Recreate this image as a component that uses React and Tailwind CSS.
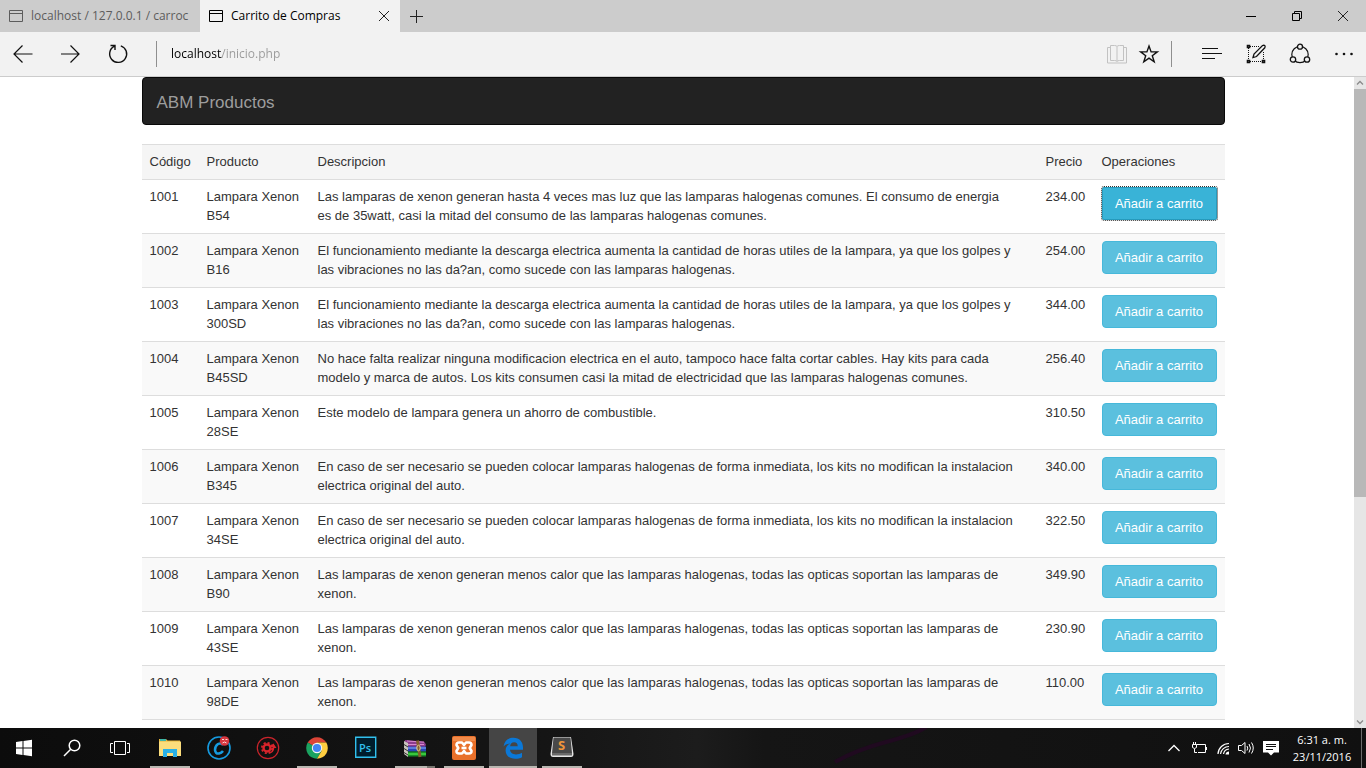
import { useState } from 'react';
import clsx from 'clsx';

const XENON_CALOR =
  'Las lamparas de xenon generan menos calor que las lamparas halogenas, todas las opticas soportan las lamparas de xenon.';
const XENON_GOLPES =
  'El funcionamiento mediante la descarga electrica aumenta la cantidad de horas utiles de la lampara, ya que los golpes y las vibraciones no las da?an, como sucede con las lamparas halogenas.';
const XENON_KITS =
  'En caso de ser necesario se pueden colocar lamparas halogenas de forma inmediata, los kits no modifican la instalacion electrica original del auto.';

const products = [
  {
    id: '1001',
    name: 'Lampara Xenon B54',
    description:
      'Las lamparas de xenon generan hasta 4 veces mas luz que las lamparas halogenas comunes. El consumo de energia es de 35watt, casi la mitad del consumo de las lamparas halogenas comunes.',
    price: 234,
  },
  { id: '1002', name: 'Lampara Xenon B16', description: XENON_GOLPES, price: 254 },
  { id: '1003', name: 'Lampara Xenon 300SD', description: XENON_GOLPES, price: 344 },
  {
    id: '1004',
    name: 'Lampara Xenon B45SD',
    description:
      'No hace falta realizar ninguna modificacion electrica en el auto, tampoco hace falta cortar cables. Hay kits para cada modelo y marca de autos. Los kits consumen casi la mitad de electricidad que las lamparas halogenas comunes.',
    price: 256.4,
  },
  {
    id: '1005',
    name: 'Lampara Xenon 28SE',
    description: 'Este modelo de lampara genera un ahorro de combustible.',
    price: 310.5,
  },
  { id: '1006', name: 'Lampara Xenon B345', description: XENON_KITS, price: 340 },
  { id: '1007', name: 'Lampara Xenon 34SE', description: XENON_KITS, price: 322.5 },
  { id: '1008', name: 'Lampara Xenon B90', description: XENON_CALOR, price: 349.9 },
  { id: '1009', name: 'Lampara Xenon 43SE', description: XENON_CALOR, price: 230.9 },
  { id: '1010', name: 'Lampara Xenon 98DE', description: XENON_CALOR, price: 110 },
];

export default function App() {
  return (
    <div className="flex h-screen flex-col overflow-hidden bg-white font-['Open_Sans','Noto_Sans',sans-serif]">
      <TabStrip />
      <Toolbar />
      <div className="relative min-h-0 flex-1 overflow-hidden">
        <ProductPage />
        <Scrollbar />
      </div>
      <Taskbar />
    </div>
  );
}

/* Browser */

function TabStrip() {
  return (
    <header className="flex h-8 shrink-0 bg-[#cccccc] text-xs">
      <Tab title="localhost / 127.0.0.1 / carroc" />
      <Tab title="Carrito de Compras" active />
      <button aria-label="Nueva pestaña" className="flex w-8 items-center justify-center">
        <svg width="14" height="14" stroke="#222" fill="none">
          <path d="M7.5 1v13M1 7.5h13" />
        </svg>
      </button>
      <div className="ml-auto flex">
        <button aria-label="Minimizar" className="flex w-[46px] items-center justify-center">
          <svg width="10" height="10" stroke="#000" fill="none">
            <path d="M0 5.5h10" />
          </svg>
        </button>
        <button aria-label="Restaurar" className="flex w-[46px] items-center justify-center">
          <svg width="10" height="10" stroke="#000" fill="none">
            <path d="M.5 2.5h7v7h-7zM2.5 2.5v-2h7v7h-2" />
          </svg>
        </button>
        <button aria-label="Cerrar" className="flex w-[46px] items-center justify-center">
          <CloseIcon />
        </button>
      </div>
    </header>
  );
}

function Tab({ title, active }) {
  return (
    <div
      className={clsx(
        'flex w-[200px] items-center pr-2 pl-[9px]',
        active ? 'bg-[#f2f2f2] text-black' : 'text-[#5c5c5c]'
      )}
    >
      <svg width="14" height="12" fill="none" stroke="currentColor" className="shrink-0">
        <path d="M.5 .5h13v11H.5zM.5 3.5h13" />
      </svg>
      <span className="ml-2 flex-1 overflow-hidden whitespace-nowrap">{title}</span>
      {active && (
        <button aria-label="Cerrar pestaña" className="flex w-4 justify-center">
          <CloseIcon />
        </button>
      )}
    </div>
  );
}

function CloseIcon() {
  return (
    <svg width="10" height="10" stroke="#222" fill="none">
      <path d="M0 0l10 10M10 0L0 10" />
    </svg>
  );
}

function ToolButton({ label, className, children }) {
  return (
    <button aria-label={label} className={clsx('flex h-full items-center justify-center', className)}>
      <svg width="22" height="22" fill="none" stroke="#111">
        {children}
      </svg>
    </button>
  );
}

function Toolbar() {
  const [url, setUrl] = useState('localhost/inicio.php');

  return (
    <nav className="flex h-[45px] shrink-0 items-center border-b border-[#cccccc] bg-[#f2f2f2]">
      <ToolButton label="Atrás" className="w-[47px]">
        <path d="M.5 11h19M9.500 2.500L1 11l8.500 8.500" strokeWidth="1.200" />
      </ToolButton>
      <ToolButton label="Adelante" className="w-[47px]">
        <path d="M1 11h18.500M10.500 2.500L19 11l-8.500 8.500" strokeWidth="1.200" />
      </ToolButton>
      <ToolButton label="Actualizar" className="w-[47px]">
        <path d="M13.800 2.800A8.500 8.500 0 1 1 7.500 3.200M3.500 2.500h4.500v4.500" strokeWidth="1.400" />
      </ToolButton>
      <div className="ml-[15px] h-[26px] w-px bg-[#8f8f8f]" />
      <input
        aria-label="Dirección"
        value={url}
        onChange={(e) => setUrl(e.target.value)}
        className="ml-3.5 min-w-0 flex-1 bg-[linear-gradient(90deg,#000_51px,#999_51px)] bg-clip-text text-xs text-transparent outline-none"
      />
      <ToolButton label="Vista de lectura" className="w-8">
        <g stroke="#c2c2c2">
          <path d="M4.500 2.500h4q2 0 2.500 1 .5-1 2.500-1h4v15h-4q-2 0-2.500 1-.5-1-2.500-1h-4zM11 3.500v15" />
          <path d="M4 4.500H1.500v15.500h19V4.500H18" />
        </g>
      </ToolButton>
      <ToolButton label="Favoritos" className="w-8">
        <path
          d="M11 3l2.100 5.900h6.200l-5 3.800 1.900 6.100L11 15.200l-5.200 3.600 1.900-6.100-5-3.800h6.200z"
          strokeWidth="1.400"
        />
      </ToolButton>
      <div className="mr-[18px] ml-1.5 h-[26px] w-px bg-[#8f8f8f]" />
      <ToolButton label="Centro" className="w-11">
        <path d="M1 5.500h16M1 10.500h20M1 15.500h13" />
      </ToolButton>
      <ToolButton label="Crear nota web" className="w-11">
        <path d="M5 3.500h9M5 18.500h12M3.500 5v12M18.500 9v8" strokeDasharray="1 1" />
        <path d="M2.500 2.500h2v2h-2zM2.500 17.500h2v2h-2zM17.500 17.500h2v2h-2z" strokeWidth="1.600" />
        <path d="M8 14.500l1-3.500 8.500-8.500q1.500-.5 2.300 0 .7 1 0 2.300L11.500 13.500z" strokeWidth="1.300" />
      </ToolButton>
      <ToolButton label="Compartir" className="w-11">
        <circle cx="11" cy="11.500" r="8.200" strokeWidth="1.200" />
        <g fill="#f2f2f2" strokeWidth="1.300">
          <circle cx="11" cy="3.700" r="2.500" />
          <circle cx="4" cy="16.500" r="2.700" />
          <circle cx="18" cy="16.500" r="2.700" />
        </g>
      </ToolButton>
      <ToolButton label="Más" className="w-11">
        <g fill="#111" stroke="none">
          <circle cx="3.500" cy="11" r="1.300" />
          <circle cx="11" cy="11" r="1.300" />
          <circle cx="18.500" cy="11" r="1.300" />
        </g>
      </ToolButton>
    </nav>
  );
}

function Scrollbar() {
  return (
    <div className="absolute inset-y-0 right-0 flex w-3 flex-col bg-[#e6e6e6]">
      <svg width="12" height="12" fill="none" stroke="#8a8a8a" className="shrink-0">
        <path d="M3 7.500l3-3 3 3" strokeWidth="1.300" />
      </svg>
      <div className="min-h-0 flex-1">
        <div className="h-[65%] bg-[#b8b8b8]" />
      </div>
      <svg width="12" height="12" fill="none" stroke="#8a8a8a" className="shrink-0">
        <path d="M3 4.500l3 3 3-3" strokeWidth="1.300" />
      </svg>
    </div>
  );
}

/* Page */

function ProductPage() {
  return (
    <main className="mx-auto max-w-[1083px] font-['Liberation_Sans',Arial,sans-serif] text-[13px] leading-[19px] text-[#333]">
      <div className="mb-[19px] flex h-12 items-center rounded border border-[#080808] bg-[#222] px-3.5 pt-0.5">
        <a href="#" className="text-[17px] text-[#9d9d9d]">
          ABM Productos
        </a>
      </div>

      <table className="w-full table-fixed border-b border-[#ddd] text-left">
        <thead>
          <tr className="border-t border-[#ddd] bg-[#f5f5f5]">
            <HeaderCell className="w-[57px]">Código</HeaderCell>
            <HeaderCell className="w-[111px]">Producto</HeaderCell>
            <HeaderCell>Descripcion</HeaderCell>
            <HeaderCell className="w-14">Precio</HeaderCell>
            <HeaderCell className="w-[131px]">Operaciones</HeaderCell>
          </tr>
        </thead>
        <tbody>
          {products.map((product, index) => (
            <tr key={product.id} className="border-t border-[#ddd] align-top even:bg-[#f9f9f9]">
              <td className="px-2 pt-[7px] pb-2">{product.id}</td>
              <td className="px-2 pt-[7px] pb-2">{product.name}</td>
              <td className="pt-[7px] pr-[23px] pb-2 pl-2">{product.description}</td>
              <td className="px-2 pt-[7px] pb-2">{product.price.toFixed(2)}</td>
              <td className="px-2 pt-[7px]">
                <button
                  className={clsx(
                    'h-[33px] w-full border text-white',
                    index === 0
                      ? 'rounded-xs border-[#269abc] bg-[#39b3d7] outline-1 outline-dotted outline-[#333]'
                      : 'rounded border-[#46b8da] bg-[#5bc0de]'
                  )}
                >
                  Añadir a carrito
                </button>
              </td>
            </tr>
          ))}
        </tbody>
      </table>
    </main>
  );
}

function HeaderCell({ className, children }) {
  return <th className={clsx('px-2 pt-[7px] pb-2 font-normal', className)}>{children}</th>;
}

/* Windows taskbar */

function Taskbar() {
  return (
    <footer className="relative flex h-10 shrink-0 bg-[linear-gradient(90deg,#0c0c0c,#151515_40%,#1c1c1c_51%,#151515_56%,#101010)] text-white">
      <svg width="96" height="40" className="absolute left-[832px]" fill="none">
        <path d="M3 34Q24 22 54 14T94 -1" stroke="#200a20" strokeWidth="4" />
      </svg>

      <div className="mr-0.5 flex">
        <SystemButton label="Inicio">
          <path
            d="M4 6l6.500-1v6.500H4zM11.500 4.900L20 3.700v7.800h-8.500zM4 12.500h6.500V19L4 18zM11.500 12.500H20v7.800L11.500 19.100z"
            fill="#fff"
          />
        </SystemButton>
        <SystemButton label="Buscar">
          <circle cx="14.500" cy="9.500" r="5.300" stroke="#fff" strokeWidth="1.500" />
          <path d="M10.700 13.300L4 20" stroke="#fff" strokeWidth="1.500" />
        </SystemButton>
        <SystemButton label="Vista de tareas">
          <path d="M6.500 5.500h11v13h-11zM5 7.500H2.500v9H5M19 7.500h2.500v9H19" stroke="#fff" />
        </SystemButton>
      </div>

      <div className="flex gap-px">
        <TaskButton label="Explorador de archivos" running>
          <path d="M1 3h7l1.500 1.500H22V20H1z" fill="#e8b73c" />
          <path d="M2 3h6v2H2z" fill="#3fb6a8" />
          <path d="M1 5.500h22V20H1z" fill="#fbdd7c" />
          <path d="M5 13h14v8h-4v-4H9v4H5z" fill="#29b0e6" />
        </TaskButton>
        <TaskButton label="CCleaner">
          <circle cx="12" cy="12" r="11" stroke="#169be0" strokeWidth="1.600" />
          <path d="M16 9Q14 6.500 11 8 8 10 8 14q.5 4.200 4 3.500 2.500-.5 4-2.500" stroke="#169be0" strokeWidth="2.500" />
          <circle cx="17.500" cy="5" r="4.800" fill="#d8373f" />
          <path d="M15 3.500h2M18.500 3.500h2M15.500 7q2-2 4 0" stroke="#fbd5d5" />
        </TaskButton>
        <TaskButton label="Optimizador">
          <circle cx="12" cy="12" r="10.700" stroke="#c9242b" strokeWidth="1.200" />
          <circle cx="11" cy="12" r="3.500" stroke="#d8242b" strokeWidth="2.400" />
          <circle cx="11" cy="12" r="5.200" stroke="#d8242b" strokeWidth="1.800" strokeDasharray="2.100 1.980" />
          <path d="M12 18q4.500-2 4.500-7H13l4.500-3.500L20.500 12h-2.200q0 5-6.300 6z" fill="#d8242b" />
        </TaskButton>
        <TaskButton label="Google Chrome" running>
          <path d="M12 12L2.650 6.600A10.800 10.800 0 0 1 21.350 6.600H12z" fill="#dc4437" />
          <path d="M12 12L2.650 6.600A10.800 10.800 0 0 0 12 22.800L16.700 14.700z" fill="#1aa260" />
          <path d="M12 12L16.700 14.700 12 22.800A10.800 10.800 0 0 0 21.350 6.600H12z" fill="#ffcd40" />
          <circle cx="12" cy="12" r="5.200" fill="#f5f5f5" />
          <circle cx="12" cy="12" r="4.100" fill="#4285f4" />
        </TaskButton>
        <TaskButton label="Photoshop">
          <path d="M1.700 1.200h20v20h-20z" fill="#001d2c" stroke="#31c0ee" strokeWidth="1.400" />
          <text x="5" y="15.500" fill="#31c0ee" fontSize="11" fontWeight="600">
            Ps
          </text>
        </TaskButton>
        <TaskButton label="WinRAR" running stacked>
          <path d="M2 4l19 1.500 2 3-1 3H4L1 8z" fill="#8d3d8d" />
          <path d="M4 5l17 1.200M3 8.500h18" stroke="#d88ad0" />
          <path d="M2 10.500h21v5H4l-3-2z" fill="#2846b8" />
          <path d="M4 12h19" stroke="#8fb0ff" />
          <path d="M1 15.500h22v5H5l-3-2z" fill="#178a25" />
          <path d="M4 18h19" stroke="#4bea4b" strokeWidth="1.300" />
          <path d="M1 5l4 2v14l-4-3z" fill="#c9c4bd" />
          <path d="M1 8.500l4 2.500M1 12.500l4 2.500M1 16.500l4 2.500" stroke="#333" />
          <path d="M14.500 4.500l2.500 16.500" stroke="#84602c" strokeWidth="3" />
          <ellipse cx="15.500" cy="12" rx="1.700" ry="2.800" stroke="#e8d08e" />
        </TaskButton>
        <TaskButton label="XAMPP" running>
          <rect x="0" y="0" width="24" height="24" rx="2" fill="#e8702a" />
          <path d="M1 1h22v4H1z" fill="#f08a4a" />
          <g stroke="#fff" strokeWidth="2.600" strokeLinejoin="round">
            <path d="M12 9L10 6.500H7Q4.500 6.500 4.500 9L6.300 12 4.500 15Q4.500 17.500 7 17.500h3L12 15l2 2.500h3q2.500 0 2.500-2.500L17.700 12l1.800-3Q19.500 6.500 17 6.500h-3z" />
            <path d="M9.500 12h5" />
          </g>
        </TaskButton>
        <TaskButton label="Microsoft Edge" active>
          <path
            d="M2.500 10.500C3.500 4.500 7.500 1.800 12.500 1.800c6 0 9.500 4 9.500 9.700v2.300H9c.3 3 2.800 4.600 6 4.600 2.200 0 4.300-.6 6-1.600v4.500c-2 1-4.200 1.500-6.800 1.500-5.700 0-9.600-3.200-9.600-8.300 0-3.200 1.600-5.600 4.600-7.100C5.800 7.800 3.800 8.700 2.500 10.500zM9.100 10.200h7.600c0-2.600-1.200-4-3.600-4-2.300 0-3.600 1.400-4 4z"
            fill="#0b78d7"
          />
        </TaskButton>
        <TaskButton label="Sublime Text" running>
          <path d="M3 1h18l2.500 17q0 3-2.500 3H3q-2.500 0-2.500-3z" fill="#e6e6e6" />
          <path d="M3.500 1.500h17L22 17H2z" fill="#494949" />
          <path d="M2 17h20v2.500H2z" fill="#6a6a6a" />
          <text x="8" y="13.500" fill="#f0953a" fontSize="13" fontWeight="700">
            S
          </text>
        </TaskButton>
      </div>

      <div className="ml-auto flex items-center">
        <TrayButton label="Mostrar iconos ocultos" className="w-[26px]">
          <path d="M2.500 11l5.500-5.500 5.500 5.500" stroke="#fff" strokeWidth="1.300" />
        </TrayButton>
        <TrayButton label="Batería" className="w-6">
          <path d="M5.500 4.500h9v8H7M15.500 7v3M1.500 4.500h4v3q-2 2-4 0zM2.500 2v2M4.500 2v2M3.500 9v3.500H6" stroke="#fff" />
        </TrayButton>
        <TrayButton label="Wi-Fi" className="w-6">
          <path d="M3 14A11 11 0 0 1 14 3.500M5.500 14A8.500 8.500 0 0 1 14 6.500M8.500 14A6 6 0 0 1 14 9" stroke="#fff" strokeWidth="1.200" />
          <path d="M10.500 14.500a3.500 3.500 0 0 1 3.500-3v3z" fill="#fff" />
        </TrayButton>
        <TrayButton label="Volumen" className="w-[22px]">
          <path d="M.5 5.500h3l3.500-3v11l-3.500-3h-3zM9 6q1.500 2 0 4.500M11 4q3 4 0 8.500M13.500 2.500q3.500 5.500 0 11" stroke="#fff" />
        </TrayButton>
        <TrayButton label="Notificaciones" className="w-7">
          <path d="M0 1h16v11.500h-5L8 15.500l-3-3H0z" fill="#fff" />
          <path d="M3 4.500h10M3 6.500h10M3 9.500h7" stroke="#111" />
        </TrayButton>
        <button className="w-[74px] text-center text-[11px] leading-[17px] whitespace-nowrap">
          6:31 a. m.
          <br />
          23/11/2016
        </button>
        <button
          aria-label="Mostrar escritorio"
          className="ml-0.5 h-full w-[5px] border-l border-[#6b6b6b]"
        />
      </div>
    </footer>
  );
}

function SystemButton({ label, children }) {
  return (
    <button aria-label={label} className="flex w-12 items-center justify-center">
      <svg width="24" height="24" fill="none">
        {children}
      </svg>
    </button>
  );
}

function TaskButton({ label, running, stacked, active, children }) {
  return (
    <button
      aria-label={label}
      className={clsx('flex w-12 flex-col items-center', active && 'bg-[#454545]')}
    >
      <svg width="24" height="24" fill="none" className="mt-2">
        {children}
      </svg>
      <span className={clsx('mt-auto flex h-0.5', active ? 'w-12' : 'w-10')}>
        {(running || active) && <span className="flex-1 bg-[#b9b7b1]" />}
        {stacked && <span className="w-2 bg-[#77756f]" />}
      </span>
    </button>
  );
}

function TrayButton({ label, className, children }) {
  return (
    <button aria-label={label} className={clsx('flex h-full items-center justify-center', className)}>
      <svg width="16" height="16" fill="none">
        {children}
      </svg>
    </button>
  );
}
